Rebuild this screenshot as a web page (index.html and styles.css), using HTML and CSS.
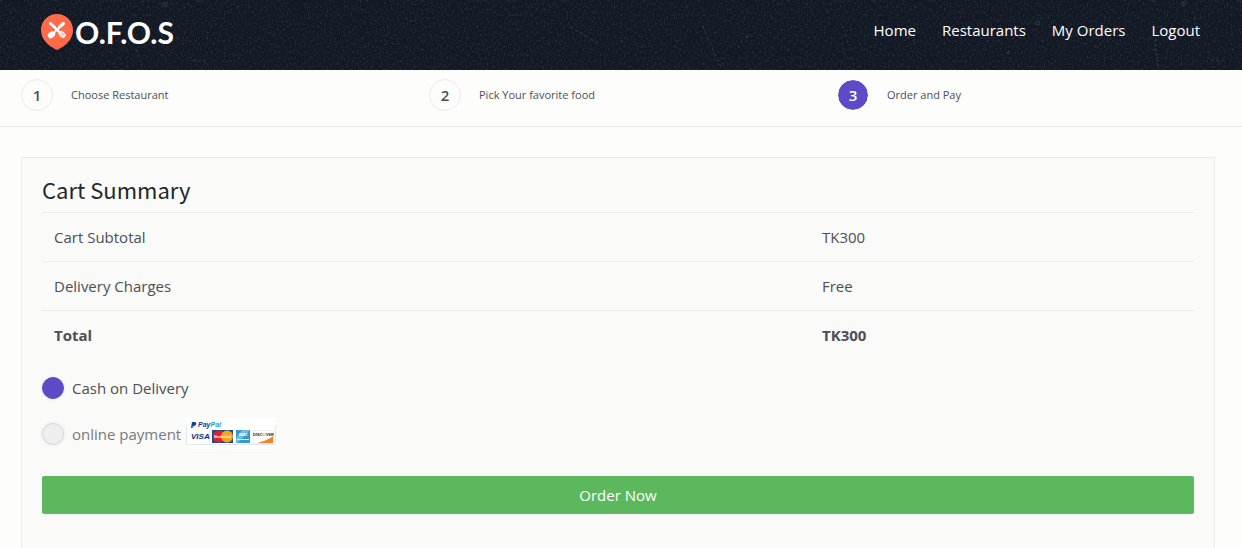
FILE: index.html
```html
<!DOCTYPE html>
<html lang="en">
<head>
<meta charset="utf-8">
<meta name="viewport" content="width=device-width, initial-scale=1">
<title>O.F.O.S - Checkout</title>
<link rel="stylesheet" href="styles.css">
</head>
<body>
<header class="header">
  <svg class="header-texture" aria-hidden="true">
    <filter id="grain" x="0" y="0" width="100%" height="100%" color-interpolation-filters="sRGB">
      <feTurbulence type="fractalNoise" baseFrequency="0.7 0.35" numOctaves="3" seed="8"/>
      <feColorMatrix type="matrix" values="0 0 0 0 0.5  0 0 0 0 0.55  0 0 0 0 0.6  0.6 0 0 0 -0.3"/>
    </filter>
    <rect width="100%" height="100%" filter="url(#grain)"/>
    <g fill="none" stroke="#68717c" stroke-width="1" opacity=".4">
      <circle cx="165" cy="4" r="2"/>
      <path d="M137 50q3 10 6 20M190 57l7 4 9 0" stroke-dasharray="2 3"/>
      <path d="M703 26q7 19 19 43M570 27l28 16" stroke-dasharray="3 3"/>
      <circle cx="1184" cy="4" r="2"/>
      <circle cx="1038" cy="23" r="2"/>
      <path d="M1156 38q-1 18 3 31M1207 57l7 4 9 0M1104 17l5 2" stroke-dasharray="3 2"/>
      <circle cx="1008" cy="53" r="1"/>
      <circle cx="747" cy="37" r="1"/>
    </g>
  </svg>
  <a class="logo" href="#" aria-label="O.F.O.S home">
    <svg class="logo-pin" viewBox="0 0 32 36" aria-hidden="true">
      <path d="M16 0C7 0 0 7 0 16c0 7 4 12 9 16l5 3q2 1.600 4 0l5-3c5-4 9-9 9-16C32 7 25 0 16 0Z" fill="#ff6b4a"/>
      <g fill="none" stroke="#fff" stroke-linecap="round">
        <path d="M22.500 9.500 11 20.500" stroke-width="2"/>
        <path d="M22.500 9.500 18.500 13" stroke-width="3"/>
        <path d="M9.500 9.500 14 13.500" stroke-width="3"/>
        <path d="M13 13 20 19.500" stroke-width="2"/>
        <path d="M18 17.500q-.5 4 4.500 6M18 17.500q4-.5 6.500 4M19 18.500l4.500 4" stroke-width="1.200"/>
      </g>
      <ellipse cx="10.500" cy="20.800" rx="4" ry="3" transform="rotate(-40 10.500 20.800)" fill="#fff"/>
    </svg>
    <span class="logo-text">O.F.O.S</span>
  </a>
  <nav class="nav">
    <a href="#">Home</a>
    <a href="#">Restaurants</a>
    <a href="#">My Orders</a>
    <a href="#">Logout</a>
  </nav>
</header>

<ol class="steps">
  <li class="step"><span class="step-number">1</span><a href="#">Choose Restaurant</a></li>
  <li class="step"><span class="step-number">2</span><a href="#">Pick Your favorite food</a></li>
  <li class="step step-active"><span class="step-number">3</span><a href="#">Order and Pay</a></li>
</ol>

<main class="page">
  <form class="card">
    <h1 class="card-title">Cart Summary</h1>
    <table class="summary">
      <tbody>
        <tr><td>Cart Subtotal</td><td>TK300</td></tr>
        <tr><td>Delivery Charges</td><td>Free</td></tr>
        <tr class="summary-total"><td>Total</td><td>TK300</td></tr>
      </tbody>
    </table>
    <div class="payments">
      <label class="payment">
        <input class="radio" type="radio" name="payment" value="cod" checked>
        <span>Cash on Delivery</span>
      </label>
      <label class="payment payment-disabled">
        <input class="radio" type="radio" name="payment" value="online" disabled>
        <span>online payment</span>
        <svg class="cards" viewBox="0 0 90 31" role="img" aria-label="PayPal, Visa, MasterCard, American Express, Discover">
          <rect width="90" height="31" fill="#fff"/>
          <path d="M.5 7.500V26.500H89.500V7.500M23.500 12v14" fill="none" stroke="#e6e7ea"/>
          <path d="M6 4h3q2 .5 1 3-1 1-3 1l-.5 2H5Z" fill="#16408f"/>
          <path d="M9.500 5.500q1 2-2 3L7 10H6l.5-2q3 0 3-2.500Z" fill="#20a3db"/>
          <text class="cards-paypal" x="12" y="9"><tspan fill="#17358b">Pay</tspan><tspan fill="#1c9ed8">Pal</tspan></text>
          <text class="cards-visa" x="5" y="21" fill="#15297c">VISA</text>
          <rect x="26" y="12" width="21" height="13" fill="#214a87"/>
          <circle cx="33" cy="18.500" r="6" fill="#e0202b"/>
          <circle cx="41" cy="18.500" r="6" fill="#f6a21c"/>
          <text class="cards-small" x="36.500" y="20" fill="#fff" text-anchor="middle">MasterCard</text>
          <rect x="50" y="12" width="14" height="13" fill="#3599cf"/>
          <path d="M50 20l6-8h8L52 25h-2Z" fill="#69bce2"/>
          <text class="cards-small" x="57" y="18" fill="#fff" text-anchor="middle">AMEX</text>
          <path d="M51 21.500h12" stroke="#d8effa"/>
          <rect x="67.500" y="12.500" width="20" height="13" fill="#fff" stroke="#eceef0"/>
          <path d="M87 18v7H71q10-2 16-7Z" fill="#f28427"/>
          <text class="cards-discover" x="77.500" y="18" fill="#28272c" text-anchor="middle">DISC<tspan fill="#f28427">O</tspan>VER</text>
        </svg>
      </label>
    </div>
    <button class="order-button" type="submit">Order Now</button>
  </form>
</main>
</body>
</html>
```

FILE: styles.css
```css
* {
  box-sizing: border-box;
}

body {
  margin: 0;
  background: #fdfdfb;
  color: #4b4f56;
  font: 15px/24px "Segoe UI", "Open Sans", sans-serif;
}

a {
  color: inherit;
  text-decoration: none;
}

.header {
  position: relative;
  display: flex;
  align-items: flex-start;
  justify-content: space-between;
  height: 70px;
  padding: 14px 42px 0 41px;
  background: #121925;
  color: #fff;
}

.header-texture {
  position: absolute;
  inset: 0;
  width: 100%;
  height: 100%;
}

.logo,
.nav {
  position: relative;
  display: flex;
}

.logo {
  align-items: center;
  gap: 2px;
}

.logo-pin {
  width: 32px;
  height: 36px;
}

.logo-text {
  font: 700 30px/36px Lato, sans-serif;
}

.nav {
  gap: 26px;
  padding-top: 4px;
}

.steps {
  display: grid;
  grid-template-columns: repeat(3, 1fr);
  margin: 0;
  padding: 9px 0 15px 18px;
  border-bottom: 1px solid #eaebeb;
  list-style: none;
  font-size: 11px;
}

.step {
  display: flex;
  align-items: center;
  gap: 18px;
  padding-left: 3px;
}

.step-number {
  width: 32px;
  height: 32px;
  border: 1px solid #eaebeb;
  border-radius: 50%;
  font-size: 15px;
  font-weight: 600;
  line-height: 30px;
  text-align: center;
}

.step-active .step-number {
  border-color: #fdfdfb;
  background: #5c4ac7;
  background-clip: padding-box;
  color: #fff;
}

.page {
  padding: 30px 27px 30px 21px;
}

.card {
  padding: 20px 20px 50px;
  border: 1px solid #eaebeb;
  background: #fafaf8;
}

.card-title {
  margin: 0 0 12px;
  color: #25282b;
  font: 400 22px/22px "Source Sans Pro", "Noto Sans CJK SC", sans-serif;
}

.summary {
  width: 100%;
  border-collapse: collapse;
}

.summary td {
  width: 33.3%;
  padding: 12px;
  border-top: 1px solid #eceeef;
}

.summary td:first-child {
  width: 66.6%;
}

.summary-total {
  font-weight: 700;
}

.payments {
  display: grid;
  gap: 15px;
  padding-top: 13px;
}

.payment {
  display: flex;
  align-items: center;
  min-height: 31px;
}

.payment-disabled {
  color: #777b80;
}

.radio {
  width: 22px;
  height: 22px;
  margin: 0 8px 0 0;
  border: 1px solid #d5d6dc;
  border-radius: 50%;
  background: #eee;
  box-shadow: 0 0 0 2px #f4f4f3;
  appearance: none;
}

.radio:checked {
  border-color: #5c4ac7;
  background: #5c4ac7;
}

.cards {
  width: 90px;
  height: 31px;
  margin-left: 5px;
}

.cards text {
  font-family: "Liberation Sans", sans-serif;
  font-weight: 700;
}

.cards-paypal {
  font-size: 7px;
  font-style: italic;
}

.cards-visa {
  font-size: 8px;
  font-style: italic;
}

.cards-small {
  font-size: 3px;
}

.cards-discover {
  font-size: 4px;
}

.order-button {
  display: block;
  width: 100%;
  margin-top: 27px;
  padding: 7px 12px;
  border: 0;
  border-radius: 2px;
  background: #5cb85c;
  color: #fff;
  font: inherit;
}
```
